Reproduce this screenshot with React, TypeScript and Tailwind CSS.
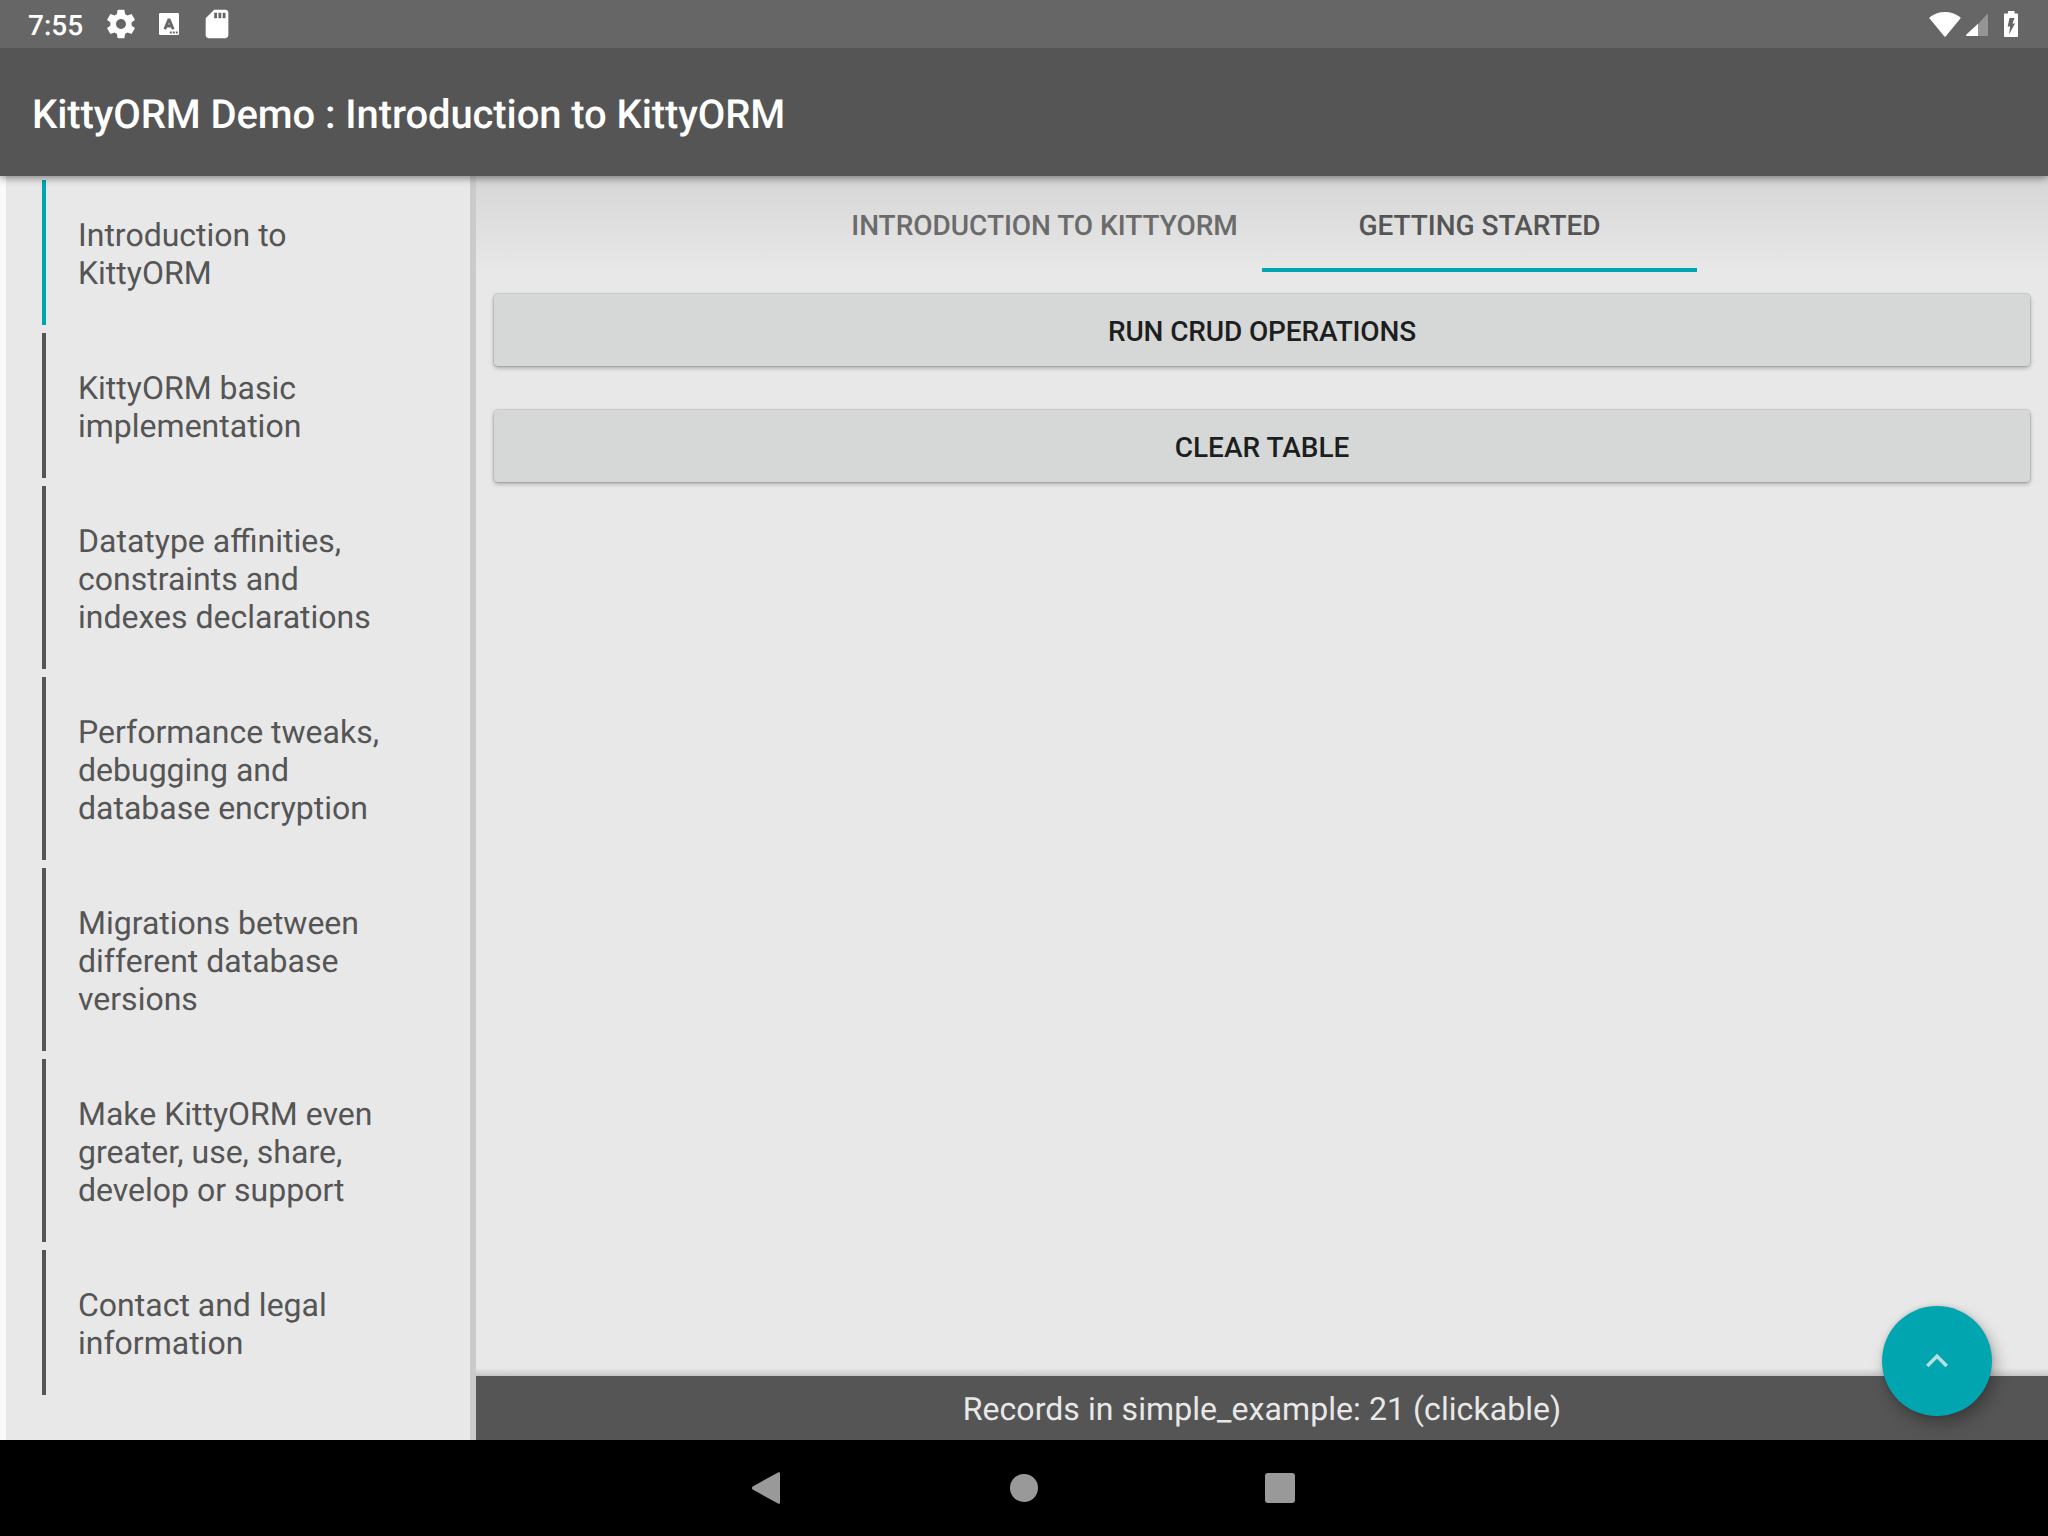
const chapters: string[][] = [
  ["Introduction to", "KittyORM"],
  ["KittyORM basic", "implementation"],
  ["Datatype affinities,", "constraints and", "indexes declarations"],
  ["Performance tweaks,", "debugging and", "database encryption"],
  ["Migrations between", "different database", "versions"],
  ["Make KittyORM even", "greater, use, share,", "develop or support"],
  ["Contact and legal", "information"],
];

function StatusBar() {
  return (
    <header className="relative z-20 flex h-12 shrink-0 items-center bg-[#666666] pl-7 text-white">
      <span className="w-[76px] pt-[3px] text-[28px] leading-[33px] font-medium">7:55</span>
      <svg className="size-[34px] shrink-0" viewBox="0 0 24 24" fill="currentColor">
        <path d="M19.43 12.98c.04-.32.07-.64.07-.98s-.03-.66-.07-.98l2.11-1.65c.19-.15.24-.42.12-.64l-2-3.46c-.12-.22-.39-.3-.61-.22l-2.49 1c-.52-.4-1.08-.73-1.69-.98l-.38-2.65C14.46 2.18 14.25 2 14 2h-4c-.25 0-.46.18-.49.42l-.38 2.65c-.61.25-1.17.59-1.69.98l-2.49-1c-.23-.09-.49 0-.61.22l-2 3.46c-.13.22-.07.49.12.64l2.11 1.65c-.04.32-.07.65-.07.98s.03.66.07.98l-2.11 1.65c-.19.15-.24.42-.12.64l2 3.46c.12.22.39.3.61.22l2.49-1c.52.4 1.08.73 1.69.98l.38 2.65c.03.24.24.42.49.42h4c.25 0 .46-.18.49-.42l.38-2.65c.61-.25 1.17-.59 1.69-.98l2.49 1c.23.09.49 0 .61-.22l2-3.46c.12-.22.07-.49-.12-.64l-2.11-1.65zM12 15.5c-1.93 0-3.5-1.57-3.5-3.5s1.57-3.5 3.5-3.5 3.5 1.57 3.5 3.5-1.57 3.5-3.5 3.5z" />
      </svg>
      <svg className="ml-[21px] h-[22px] w-5 shrink-0" viewBox="0 0 20 22">
        <rect width="20" height="22" rx="1.2" fill="#fff" />
        <path d="M5.8 16.3 10 6l4.2 10.300M7.3 13h5.4" fill="none" stroke="#666" strokeWidth="2.8" strokeLinejoin="bevel" />
        <path d="M10.8 18.6h1.9v1.9h-1.9zM13.8 18.6h1.9v1.9h-1.9zM16.8 18.6h1.9v1.9h-1.9z" fill="#666" />
      </svg>
      <svg className="ml-[21px] size-[34px] shrink-0" viewBox="0 0 24 24" fill="currentColor">
        <path d="M18 2h-8L4.02 8 4 20c0 1.1.9 2 2 2h12c1.1 0 2-.9 2-2V4c0-1.1-.9-2-2-2zm-6 6h-2V4h2v4zm3 0h-2V4h2v4zm3 0h-2V4h2v4z" />
      </svg>
      <div className="ml-auto flex items-center pr-[30px]">
        <svg className="h-[26px] w-8" viewBox="0 0 32 26">
          <path d="M.7 6.2C5.2 2.8 10.4 1 16 1s10.800 1.800 15.300 5.200c.5.4.5.9.1 1.400L17 25.100c-.6.7-1.400.7-2 0L.6 7.600c-.4-.5-.4-1 .1-1.400z" fill="#fff" />
        </svg>
        <svg className="mt-[2px] ml-[5px] h-[22px] w-[22px]" viewBox="0 0 22 22">
          <path d="M12 10.200V22h9c.6 0 1-.4 1-1V.9c0-.9-.6-1.100-1.200-.5z" fill="#959595" />
          <path d="M12 9.800V22H1c-1 0-1.300-.8-.6-1.500z" fill="#fff" />
        </svg>
        <svg className="ml-4 h-[26px] w-[14px]" viewBox="0 0 14 26">
          <path d="M4 0h6.500v2.500H13c.6 0 1 .4 1 1V25c0 .6-.4 1-1 1H1c-.6 0-1-.4-1-1V3.500c0-.6.4-1 1-1h3z" fill="#fff" />
          <path d="M5.500 7h5L8.500 12.500H11L5 23.500l1.200-8H3.700z" fill="#666" />
        </svg>
      </div>
    </header>
  );
}

function Chapter({ lines, active }: { lines: string[]; active: boolean }) {
  return (
    <li
      className={
        "border-l-4 pt-9 pb-[33px] pl-8 text-[32px] leading-[38px] whitespace-nowrap text-[#555555] " +
        (active ? "border-[#00a5b0]" : "border-[#555555]")
      }
    >
      {lines.map((line) => (
        <div key={line}>{line}</div>
      ))}
    </li>
  );
}

function ActionButton({ label, className }: { label: string; className?: string }) {
  return (
    <button
      className={
        "h-[72px] w-full rounded-[4px] bg-[#d6d8d7] pt-[3px] text-[28px] leading-[33px] font-medium text-[#1d1e1e] shadow-[0_0_1px_1px_rgba(0,0,0,0.10),0_2px_4px_rgba(0,0,0,0.28)] " +
        (className ?? "")
      }
    >
      {label}
    </button>
  );
}

export default function App() {
  return (
    <div className="flex h-[1536px] w-[2048px] flex-col overflow-hidden bg-[#fafafa] font-[Roboto,sans-serif] [text-rendering:geometricPrecision]">
      <StatusBar />
      <div className="relative z-10 flex h-32 shrink-0 items-center bg-[#555555] pl-8 shadow-[0_2px_8px_rgba(0,0,0,0.45)]">
        <h1 className="pt-1 text-[40px] leading-[47px] font-medium tracking-[-0.1px] text-white">
          KittyORM Demo : Introduction to KittyORM
        </h1>
      </div>

      <div className="flex min-h-0 flex-1">
        <nav className="ml-1.5 w-[470px] shrink-0 border-r-[6px] border-[#cbcbcb] bg-[#e8e8e8] pt-1 pl-9">
          <ul className="flex flex-col gap-2">
            {chapters.map((lines, i) => (
              <Chapter key={lines[0]} lines={lines} active={i === 0} />
            ))}
          </ul>
        </nav>

        <main className="flex flex-1 flex-col bg-[#e8e8e8]">
          <div className="flex h-24 shrink-0 justify-center bg-linear-to-b from-[#d6d6d6] to-[#e8e8e8] text-[28px] leading-[33px] font-medium tracking-[-0.03px]">
            <div className="flex w-[435px] items-center justify-center border-b-4 border-transparent pt-1.5 text-[#6b6b6b]">
              INTRODUCTION TO KITTYORM
            </div>
            <div className="flex w-[435px] items-center justify-center border-b-4 border-[#00a5b0] pt-1.5 text-[#555555]">
              GETTING STARTED
            </div>
          </div>
          <div className="flex flex-1 flex-col gap-11 pt-[22px] pr-[18px] pl-[18px]">
            <ActionButton label="RUN CRUD OPERATIONS" className="tracking-[-0.14px]" />
            <ActionButton label="CLEAR TABLE" />
          </div>
          <div className="h-2 shrink-0 bg-linear-to-b from-[#e8e8e8] to-[#c5c5c5]" />
          <footer className="relative flex h-16 shrink-0 items-center justify-center bg-[#555555] pt-0.5 text-[32px] leading-[38px] tracking-[0.07px] text-[#e8e8e8]">
            Records in simple_example: 21 (clickable)
            <button className="absolute -top-[70px] right-14 flex size-[110px] items-center justify-center rounded-full bg-[#00a5b0] shadow-[4px_8px_16px_rgba(0,0,0,0.28),0_0_4px_rgba(0,0,0,0.15)]">
              <svg className="size-11" viewBox="0 0 24 24" fill="#b5dfe2">
                <path d="M12 8l-6 6 1.410 1.410L12 10.830l4.590 4.580L18 14z" />
              </svg>
            </button>
          </footer>
        </main>
      </div>

      <div className="flex h-24 shrink-0 items-center justify-center bg-black">
        <div className="flex w-64 justify-center">
          <svg className="size-12" viewBox="0 0 48 48" fill="#999999">
            <path d="M8.700 22.500 34 8.400c1-.6 2-.1 2 1v29.200c0 1.100-1 1.600-2 1L8.700 25.500c-1.100-.6-1.100-2.400 0-3z" />
          </svg>
        </div>
        <div className="flex w-64 justify-center">
          <div className="size-7 rounded-full bg-[#999999]" />
        </div>
        <div className="flex w-64 justify-center">
          <div className="size-[30px] rounded-[3px] bg-[#999999]" />
        </div>
      </div>
    </div>
  );
}
